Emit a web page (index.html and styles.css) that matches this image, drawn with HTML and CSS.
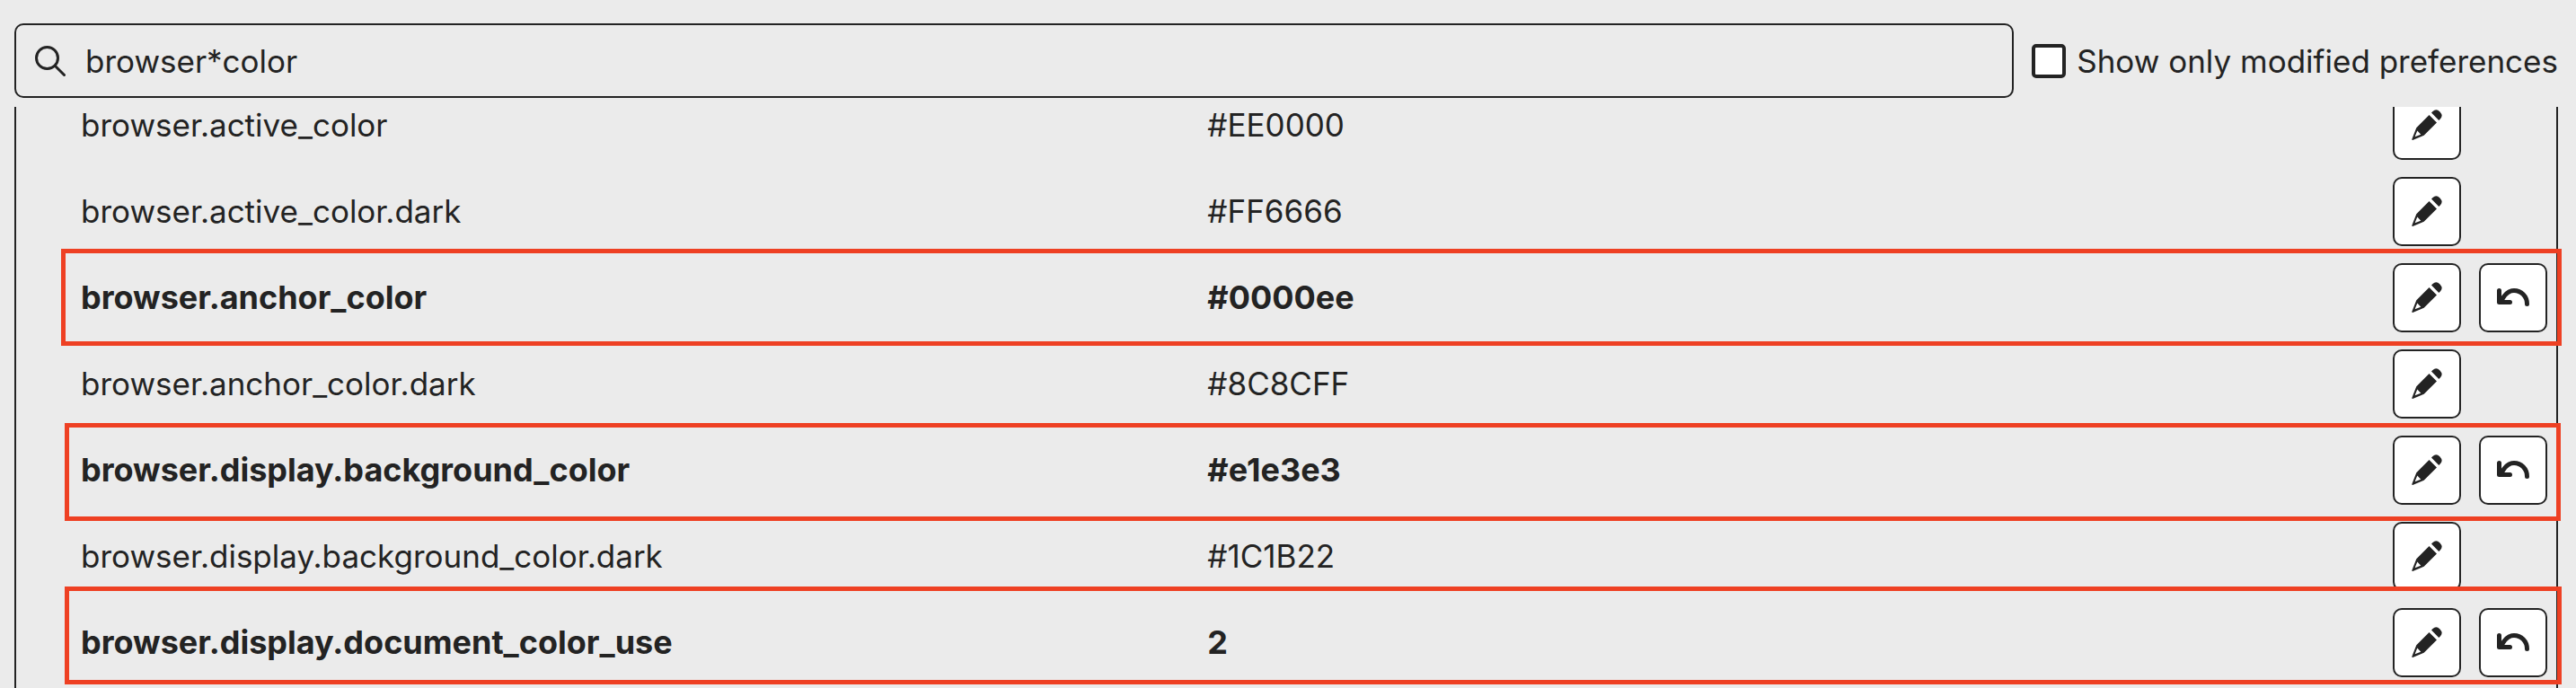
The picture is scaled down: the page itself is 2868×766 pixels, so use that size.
FILE: index.html
```html
<!DOCTYPE html>
<html lang="en">
<head>
    <meta charset="UTF-8">
    <meta name="viewport" content="width=device-width, initial-scale=1.0">
    <title>Advanced Preferences</title>
    <link rel="stylesheet" href="styles.css">
</head>
<body>

    <svg class="sprite" aria-hidden="true">
        <symbol id="icon-edit" viewBox="0 0 34 34">
            <path d="M19.5 6 28 14.5 13.7 28.800 1.800 33.800Q-0.200 34.500 0.500 32.500L5.300 20.300ZM6.300 23.500 3.600 30.300 10.300 27.800Z" fill-rule="evenodd"/>
            <path d="M22 3.500 23.500 2Q27.500-1.500 31.500 2.500 35.500 6.800 32 10.300L30.300 12Z"/>
        </symbol>
        <symbol id="icon-reset" viewBox="0 0 36 20">
            <path d="M2.500 2.500V15.500H14.500M5 14C9 5.500 14 2.500 19 2.500C27 2.500 33.500 9 33.500 17.500" fill="none" stroke="currentColor" stroke-width="5" stroke-linecap="round" stroke-linejoin="round"/>
        </symbol>
    </svg>

    <header class="toolbar">
        <div class="search">
            <svg class="search-icon" viewBox="0 0 34 34" aria-hidden="true">
                <circle cx="13.500" cy="13.500" r="12"/>
                <path d="M22.500 22.500 32.500 32.500"/>
            </svg>
            <input type="text" class="search-input" aria-label="Search preference name" value="browser*color">
        </div>
        <label class="modified-only" for="show-modified">
            <input type="checkbox" id="show-modified">
            Show only modified preferences
        </label>
    </header>

    <main class="viewport">
        <div class="list">
            <table class="prefs">
                <colgroup>
                    <col class="col-name">
                    <col class="col-value">
                    <col class="col-button">
                    <col class="col-button">
                </colgroup>
                <tr>
                    <th scope="row">browser.active_color</th>
                    <td>#EE0000</td>
                    <td class="cell-button"><button aria-label="Edit"><svg class="edit"><use href="#icon-edit"/></svg></button></td>
                    <td></td>
                </tr>
                <tr>
                    <th scope="row">browser.active_color.dark</th>
                    <td>#FF6666</td>
                    <td class="cell-button"><button aria-label="Edit"><svg class="edit"><use href="#icon-edit"/></svg></button></td>
                    <td></td>
                </tr>
                <tr class="modified mark-anchor">
                    <th scope="row">browser.anchor_color</th>
                    <td>#0000ee</td>
                    <td class="cell-button"><button aria-label="Edit"><svg class="edit"><use href="#icon-edit"/></svg></button></td>
                    <td class="cell-button"><button aria-label="Reset"><svg class="reset"><use href="#icon-reset"/></svg></button></td>
                </tr>
                <tr>
                    <th scope="row">browser.anchor_color.dark</th>
                    <td>#8C8CFF</td>
                    <td class="cell-button"><button aria-label="Edit"><svg class="edit"><use href="#icon-edit"/></svg></button></td>
                    <td></td>
                </tr>
                <tr class="modified mark-background">
                    <th scope="row">browser.display.background_color</th>
                    <td>#e1e3e3</td>
                    <td class="cell-button"><button aria-label="Edit"><svg class="edit"><use href="#icon-edit"/></svg></button></td>
                    <td class="cell-button"><button aria-label="Reset"><svg class="reset"><use href="#icon-reset"/></svg></button></td>
                </tr>
                <tr>
                    <th scope="row">browser.display.background_color.dark</th>
                    <td>#1C1B22</td>
                    <td class="cell-button"><button aria-label="Edit"><svg class="edit"><use href="#icon-edit"/></svg></button></td>
                    <td></td>
                </tr>
                <tr class="modified mark-document">
                    <th scope="row">browser.display.document_color_use</th>
                    <td>2</td>
                    <td class="cell-button"><button aria-label="Edit"><svg class="edit"><use href="#icon-edit"/></svg></button></td>
                    <td class="cell-button"><button aria-label="Reset"><svg class="reset"><use href="#icon-reset"/></svg></button></td>
                </tr>
            </table>
        </div>
    </main>

</body>
</html>
```
FILE: styles.css
```css
/* Base styling */
* {
    box-sizing: border-box;
}

body {
    display: flex;
    flex-direction: column;
    height: 100vh;
    margin: 0;
    overflow: hidden;
    background-color: #ebebeb;
    color: #232323;
    font-family: Inter, 'Liberation Sans', sans-serif;
    font-size: 35px;
    line-height: 36px;
}

.sprite {
    position: absolute;
    width: 0;
    height: 0;
}

/* Search bar */
.toolbar {
    display: flex;
    align-items: center;
    gap: 20px;
    padding: 26px 20px 10px 16px;
}

.search {
    display: flex;
    flex: 1;
    align-items: center;
    gap: 22px;
    height: 83px;
    padding: 0 21px;
    border: 2px solid #232323;
    border-radius: 10px;
}

.search-icon {
    width: 34px;
    height: 34px;
    fill: none;
    stroke: #232323;
    stroke-width: 3;
    stroke-linecap: round;
}

.search-input {
    flex: 1;
    padding: 0;
    border: none;
    outline: none;
    background: none;
    color: inherit;
    font: inherit;
}

.modified-only {
    display: flex;
    align-items: center;
    gap: 12px;
}

.modified-only input {
    appearance: none;
    width: 38px;
    height: 38px;
    margin: 0;
    border: 4px solid #232323;
    border-radius: 5px;
    background-color: #fff;
}

/* Preference list, scrolled part of the way into the first row */
.viewport {
    flex: 1;
    min-height: 0;
    padding: 0 20px 0 16px;
    overflow: hidden;
}

.list {
    min-height: 150%;
    margin-top: -28px;
    border: 2px solid #232323;
    border-width: 0 2px;
}

.prefs {
    width: 100%;
    table-layout: fixed;
    border-collapse: collapse;
}

.col-name {
    width: 46.9%;
}

.col-button {
    width: 96px;
}

.prefs tr {
    position: relative;
    height: 96px;
}

.prefs th,
.prefs td {
    padding: 0;
    text-align: left;
    font-weight: 400;
}

.prefs th {
    padding-left: 72px;
}

.prefs .modified th,
.prefs .modified td {
    font-size: 36px;
    font-weight: 700;
}

.prefs .cell-button {
    padding: 0 10px;
}

.prefs button {
    display: flex;
    align-items: center;
    justify-content: center;
    width: 76px;
    height: 77px;
    padding: 0;
    border: 2px solid #232323;
    border-radius: 10px;
    background-color: #fff;
    color: #232323;
}

.prefs svg {
    fill: currentColor;
    overflow: visible;
}

.edit {
    width: 34px;
    height: 34px;
}

.reset {
    width: 36px;
    height: 20px;
}

/* Red marker boxes over the changed rows */
.modified th::after {
    content: '';
    position: absolute;
    border: 5px solid #ee4023;
    pointer-events: none;
}

.mark-anchor th::after {
    inset: -6px -6px -6px 50px;
}

.mark-background th::after {
    inset: -4px -5px -9px 54px;
}

.mark-document th::after {
    inset: -14px -6px 1px 54px;
}
```
